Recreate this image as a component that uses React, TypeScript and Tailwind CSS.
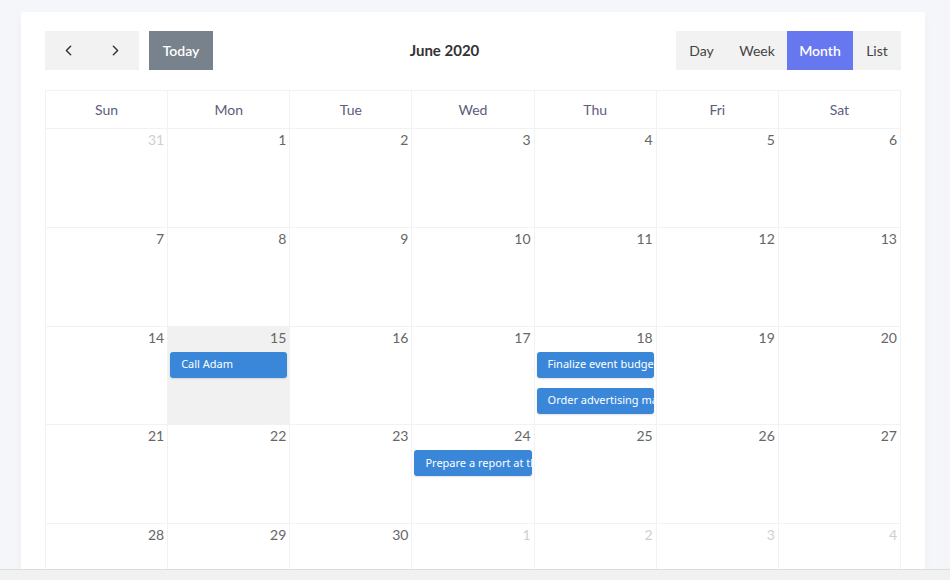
import { ChevronLeft, ChevronRight } from 'lucide-react';

interface Day {
  n: number;
  muted?: boolean;
  today?: boolean;
  events?: string[];
}

const weekdays = ['Sun', 'Mon', 'Tue', 'Wed', 'Thu', 'Fri', 'Sat'];

const weeks: Day[][] = [
  [{ n: 31, muted: true }, { n: 1 }, { n: 2 }, { n: 3 }, { n: 4 }, { n: 5 }, { n: 6 }],
  [{ n: 7 }, { n: 8 }, { n: 9 }, { n: 10 }, { n: 11 }, { n: 12 }, { n: 13 }],
  [
    { n: 14 },
    { n: 15, today: true, events: ['Call Adam'] },
    { n: 16 },
    { n: 17 },
    { n: 18, events: ['Finalize event budget', 'Order advertising materials'] },
    { n: 19 },
    { n: 20 },
  ],
  [
    { n: 21 },
    { n: 22 },
    { n: 23 },
    { n: 24, events: ['Prepare a report at the office'] },
    { n: 25 },
    { n: 26 },
    { n: 27 },
  ],
  [
    { n: 28 },
    { n: 29 },
    { n: 30 },
    { n: 1, muted: true },
    { n: 2, muted: true },
    { n: 3, muted: true },
    { n: 4, muted: true },
  ],
];

const views = [
  { label: 'Day', w: 'w-[51px]' },
  { label: 'Week', w: 'w-[60px]' },
  { label: 'Month', w: 'w-[66px]' },
  { label: 'List', w: 'w-[48px]' },
];

export default function App() {
  return (
    <div className="h-[580px] w-[950px] flex flex-col overflow-hidden bg-[#f4f6f9] font-['Lato',sans-serif]">
      <div className="flex-1 overflow-hidden pl-[21px] pr-[25px] pt-[12px]">
        <div className="bg-white rounded-[3px] shadow-[0_4px_8px_rgba(0,0,0,0.03)] px-[24px] pt-[19px] pb-6">
          {/* toolbar */}
          <div className="flex items-center justify-between h-[39px]">
            <div className="flex items-center">
              <div className="flex bg-[#f2f2f2] h-[39px]">
                <button className="w-[47px] flex items-center justify-center text-[#333]">
                  <ChevronLeft size={17} strokeWidth={2} />
                </button>
                <button className="w-[47px] flex items-center justify-center text-[#333]">
                  <ChevronRight size={17} strokeWidth={2} />
                </button>
              </div>
              <button className="ml-[10px] h-[39px] w-[64px] bg-[#78828c] text-white text-[14px] font-semibold">
                Today
              </button>
            </div>
            <h2 className="text-[15px] font-bold text-[#333]">June 2020</h2>
            <div className="flex h-[39px] bg-[#f2f2f2]">
              {views.map(v => (
                <button
                  key={v.label}
                  className={`${v.w} text-[14px] ${
                    v.label === 'Month' ? 'bg-[#6777ef] text-white font-semibold' : 'text-[#444]'
                  }`}
                >
                  {v.label}
                </button>
              ))}
            </div>
          </div>

          {/* month grid */}
          <div className="mt-[20px] border-l border-t border-[#f2f2f2]">
            <div className="grid grid-cols-7">
              {weekdays.map(d => (
                <div
                  key={d}
                  className="h-[38px] flex items-center justify-center border-r border-b border-[#f2f2f2] text-[14px] text-[#5c5c7c]"
                >
                  {d}
                </div>
              ))}
            </div>
            {weeks.map((week, wi) => (
              <div key={wi} className="grid grid-cols-7">
                {week.map((day, di) => (
                  <div
                    key={di}
                    className={`h-[98.75px] flex flex-col border-r border-b border-[#f2f2f2] ${
                      day.today ? 'bg-[#f1f1f1]' : ''
                    }`}
                  >
                    <div
                      className={`h-[24px] pt-[1px] pr-[3px] mb-[1px] text-right text-[14px] leading-[20px] ${
                        day.muted ? 'text-[#cfcfcf]' : 'text-[#666]'
                      }`}
                    >
                      {day.n}
                    </div>
                    {day.events?.map(ev => (
                      <div
                        key={ev}
                        className="mx-[2px] h-[26px] mb-[10px] bg-[#3a87d9] rounded-[3px] shadow-[0_1px_2px_rgba(0,0,0,0.12)] px-[11px] flex items-center overflow-hidden whitespace-nowrap text-white text-[11px] font-['Noto_Sans',sans-serif]"
                      >
                        {ev}
                      </div>
                    ))}
                  </div>
                ))}
              </div>
            ))}
          </div>
        </div>
      </div>
      {/* horizontal scrollbar track */}
      <div className="h-[11px] shrink-0 bg-[#f1f1f1] border-t border-[#dcdcdc]" />
    </div>
  );
}
